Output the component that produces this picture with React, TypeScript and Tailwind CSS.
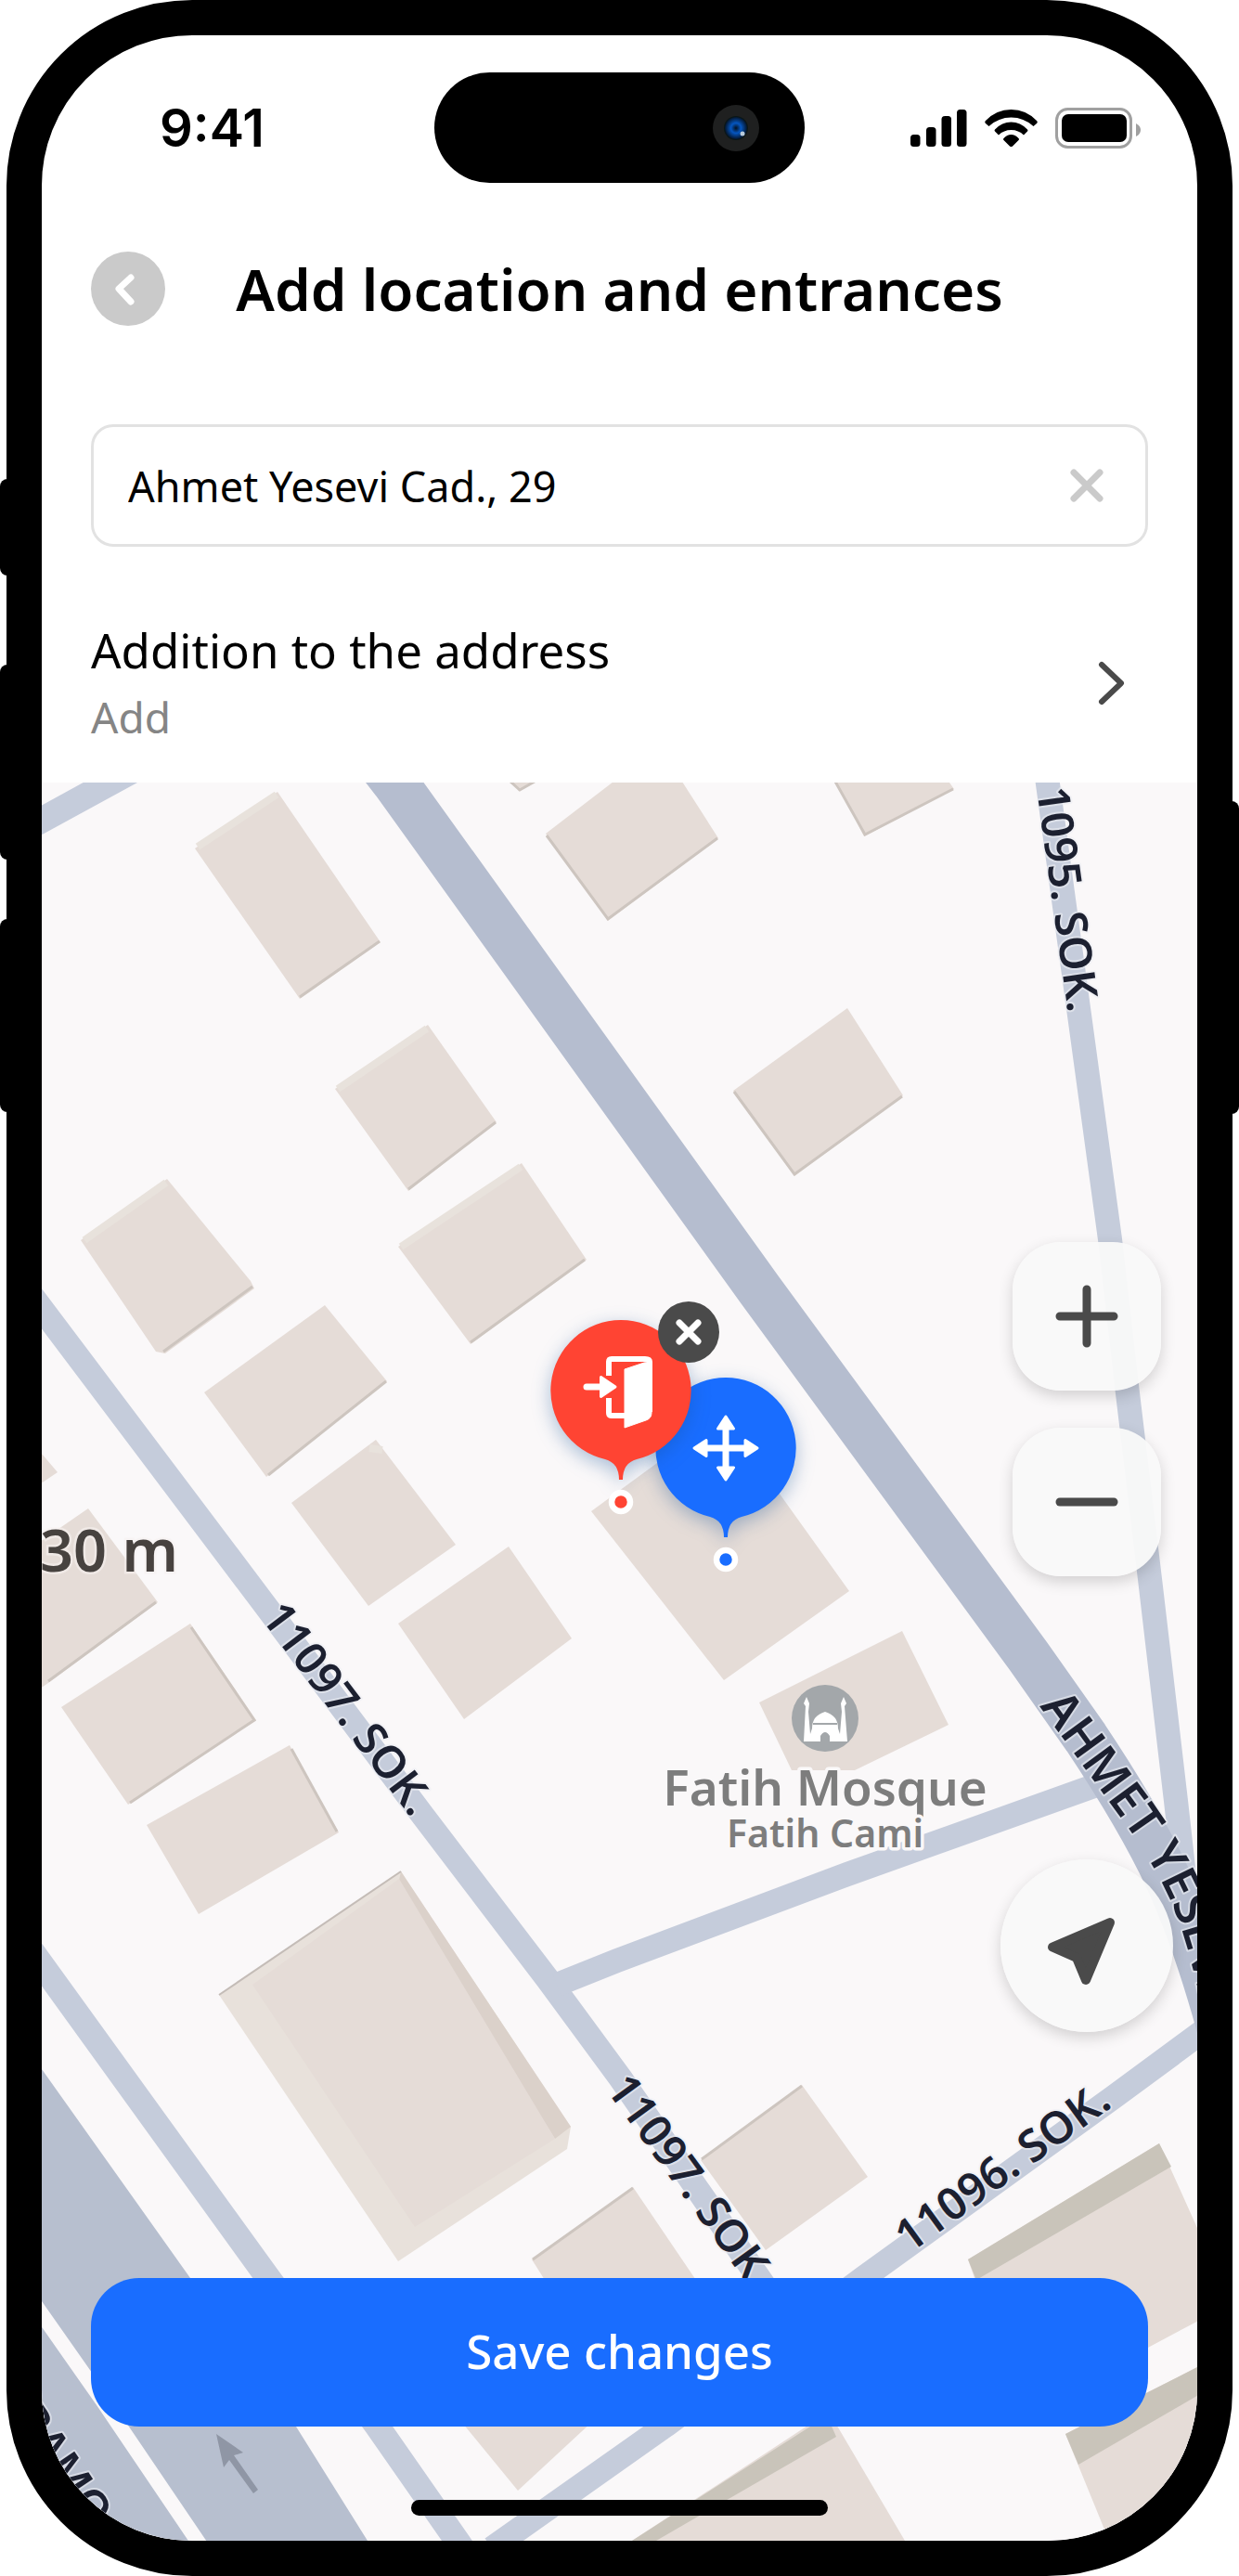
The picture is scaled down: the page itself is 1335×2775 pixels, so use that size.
import { useState } from 'react'
import type { ReactNode } from 'react'

interface Building {
  roof: string
  dark?: string
  light?: string
}

interface StreetLabel {
  text: string
  x: number
  y: number
  angle: number
}

const ROADS = [
  { d: 'M20 897 L150 826', width: 28 },
  { d: 'M1127 830 L1196 1335 L1215 1501 L1239 1701 L1267 1940 L1277 2030', width: 26 },
  { d: 'M30 1390 L284 1727 L455 1955 L590 2132 L668 2238 L815 2450 L860 2515', width: 26 },
  { d: 'M20 2082 L289 2454 L406 2613 L505 2755', width: 27 },
  { d: 'M1310 2178 L1200 2259 L930 2454 L717 2613 L530 2745', width: 26 },
  { d: 'M600 2138 L665 2112 L913 2019 L1190 1920', width: 26 },
]

const BUILDINGS: Building[] = [
  { roof: '299,853 210,914 323,1076 410,1015', dark: '323,1074 409,1014', light: '213,912 298,856' },
  { roof: '461,1104 361,1173 440,1283 535,1209', dark: '440,1281 534,1209', light: '364,1173 460,1108' },
  { roof: '562,1253 429,1343 507,1448 632,1357', dark: '507,1446 630,1357', light: '432,1343 561,1257' },
  { roof: '180,1270 87,1336 168,1456 178,1458 274,1388 270,1380', dark: '176,1456 272,1386', light: '91,1336 179,1274' },
  { roof: '350,1406 220,1500 287,1591 417,1488', dark: '289,1589 416,1488' },
  { roof: '405,1551 314,1619 397,1730 491,1664', light: '398,1560 412,1562' },
  { roof: '548,1666 429,1749 500,1852 616,1765' },
  { roof: '95,1625 30,1670 30,1828 52,1813 170,1726', dark: '52,1811 168,1726' },
  { roof: '40,1560 62,1586 40,1601' },
  { roof: '205,1749 66,1839 138,1944 276,1853', dark: '206,1753 274,1853 140,1942' },
  { roof: '312,1880 158,1966 214,2062 365,1974', dark: '314,1884 363,1973' },
  { roof: '682,2356 573,2434 640,2540 800,2530', dark: '682,2357 574,2434' },
  { roof: '558,2683 490,2600 600,2540 680,2570' },
  { roof: '864,2246 755,2327 825,2424 935,2345', dark: '864,2247 756,2326' },
  { roof: '972,1757 818,1834 853,1907 921,1907 1022,1858' },
  { roof: '779,1524 637,1628 780,1810 915,1714' },
  { roof: '661,842 588,898 655,992 774,903 735,842', dark: '589,900 655,990 773,903' },
  { roof: '898,836 931,901 1028,850 1018,836', dark: '900,842 932,899 1027,850' },
  { roof: '547,836 559,852 580,840', dark: '550,842 560,851 576,842' },
  { roof: '913,1086 790,1175 856,1267 973,1180', dark: '791,1176 856,1265 972,1181' },
]

const LABELS: StreetLabel[] = [
  { text: '1095. SOK.', x: 1117, y: 850, angle: 82 },
  { text: '11097. SOK.', x: 280, y: 1742, angle: 53 },
  { text: '11097. SOK.', x: 652, y: 2250, angle: 54 },
  { text: '11096. SOK.', x: 980, y: 2428, angle: -36 },
  { text: 'RAMO', x: 14, y: 2604, angle: 56 },
]

function StreetMap() {
  return (
    <svg
      viewBox="45 843 1245 1894"
      preserveAspectRatio="xMidYMid slice"
      className="block w-full h-full font-['Noto_Sans',sans-serif]"
      role="img"
      aria-label="Map"
    >
      <rect x="45" y="843" width="1245" height="1894" fill="#faf8f9" />

      {/* Highway */}
      <path d="M30 2207 L45 2229 L205 2454 L319 2614 L396 2737 L30 2737Z" fill="#b7bfcf" />
      <path d="M36 2480 L111 2587 L218 2745" stroke="#faf8f9" strokeWidth="16" fill="none" />
      <g fill="#8f96a5">
        <path d="M233 2622 L262 2642 L252 2645 L278 2682 L273 2686 L247 2650 L241 2658Z" />
      </g>

      {/* Roads */}
      <g fill="none" stroke="#c5ccdb" strokeLinejoin="round">
        {ROADS.map(road => (
          <path key={road.d} d={road.d} strokeWidth={road.width} />
        ))}
      </g>
      <path
        d="M400 810 L425 842 L819 1390 L1108 1784 L1170 1872 Q1232 1965 1262 2032 Q1290 2095 1316 2190"
        fill="none"
        stroke="#b5bdcf"
        strokeWidth="50"
      />

      {/* Buildings */}
      {BUILDINGS.map(b => (
        <g key={b.roof} fill="none">
          <polygon points={b.roof} fill="#e5dcd7" />
          {b.light && <polyline points={b.light} stroke="#e8e2dc" strokeWidth="8" />}
          {b.dark && <polyline points={b.dark} stroke="#cdc5bf" strokeWidth="3" />}
        </g>
      ))}

      {/* Large hall */}
      <polygon points="432,2016 236,2149 429,2436 611,2315 615,2291" fill="#e8e1db" />
      <polygon points="432,2016 615,2291 598,2304 428,2035" fill="#dbd1ca" />
      <polygon points="430,2024 272,2138 447,2399 598,2304" fill="#e5dcd7" />
      <path d="M432 2016 L236 2149" stroke="#c4bcb7" strokeWidth="2" />

      {/* Blocks in the lower right corner */}
      <polygon points="1043,2434 1249,2309 1290,2400 1310,2490 1235,2530 1180,2570 1080,2540" fill="#e5dcd7" />
      <polygon points="1043,2434 1249,2309 1262,2334 1052,2456" fill="#c9c4ba" />
      <polygon points="1148,2622 1300,2545 1300,2737 1195,2737" fill="#e5dcd7" />
      <polygon points="1148,2622 1300,2545 1300,2575 1162,2655" fill="#c9c4ba" />
      <polygon points="893,2598 975,2737 681,2737" fill="#e5dcd7" />
      <polygon points="681,2737 873,2614 890,2600 901,2625 707,2737" fill="#c9c4ba" />

      {/* Street names */}
      <g
        fill="#1c2030"
        stroke="#eceef4"
        strokeOpacity="0.6"
        strokeWidth="4"
        paintOrder="stroke"
        strokeLinejoin="round"
        fontSize="48"
        fontWeight="600"
      >
        {LABELS.map(l => (
          <text key={`${l.text}${l.x}`} x={l.x} y={l.y} transform={`rotate(${l.angle} ${l.x} ${l.y})`}>
            {l.text}
          </text>
        ))}
        <path id="ahmet-yesevi" d="M1120 1838 L1215 1968 Q1255 2025 1272 2075 Q1290 2130 1305 2210" fill="none" stroke="none" />
        <text fontSize="52">
          <textPath href="#ahmet-yesevi">AHMET YESEVİ</textPath>
        </text>
      </g>

      {/* Mosque */}
      <circle cx="889" cy="1851" r="36" fill="#a3a7aa" />
      <g fill="#fff">
        <path d="M866 1876 L868 1838 L866 1835 L869 1828 L872 1835 L871 1844 L873 1868 L875 1862 Q875 1848 889 1844 Q903 1848 903 1862 L905 1868 L907 1844 L906 1835 L909 1828 L912 1835 L910 1838 L913 1876 H894 V1870 Q889 1862 884 1870 V1876Z" />
      </g>
      <path d="M876 1857 H902" stroke="#a3a7aa" strokeWidth="2" />
      <g fill="#7d7d7d" stroke="#faf8f9" strokeWidth="7" paintOrder="stroke" strokeLinejoin="round" fontWeight="600" textAnchor="middle">
        <text x="889" y="1945" fontSize="53">Fatih Mosque</text>
        <text x="889" y="1990" fontSize="41">Fatih Cami</text>
      </g>
      <text x="43" y="1693" fontSize="63" fontWeight="600" fill="#47423f" stroke="#f6f2f0" strokeWidth="5" strokeOpacity="0.6" paintOrder="stroke">
        30 m
      </text>
    </svg>
  )
}

function Pin({ color, children }: { color: string; children: ReactNode }) {
  return (
    <svg className="block w-[154px] h-[210px] overflow-visible" viewBox="0 0 154 210" fill="none">
      <path
        d="M77 1 A76 76 0 0 1 94 151 Q79 155 79 173 H75 Q75 155 60 151 A76 76 0 0 1 77 1Z"
        fill={color}
        className="drop-shadow-[0_6px_10px_rgba(20,80,150,0.35)]"
      />
      <circle cx="77" cy="197" r="10" fill={color} stroke="#fff" strokeWidth="6.5" />
      {children}
    </svg>
  )
}

function StatusBar() {
  return (
    <div className="grid grid-cols-[1fr_399px_1fr] items-center pt-10 font-['Inter',sans-serif]">
      <time className="pl-[127px] text-[56px] leading-none font-semibold">9:41</time>
      <div className="flex h-[119px] items-center justify-end rounded-full bg-black pr-[49px]">
        <svg className="w-[50px] h-[50px]" viewBox="0 0 50 50">
          <defs>
            <radialGradient id="lens">
              <stop offset="0" stopColor="#03101f" />
              <stop offset="0.45" stopColor="#0556c0" />
              <stop offset="1" stopColor="#04152c" />
            </radialGradient>
          </defs>
          <circle cx="25" cy="25" r="25" fill="#1f2020" />
          <circle cx="25" cy="25" r="13" fill="#0b1716" />
          <circle cx="25" cy="25" r="12" fill="url(#lens)" />
          <circle cx="32" cy="31" r="2.5" fill="#b9cbdc" />
        </svg>
      </div>
      <div className="flex items-center justify-end gap-[19px] pr-[61px]">
        <svg className="w-[61px] h-10" viewBox="0 0 61 40">
          <rect x="0" y="27" width="10.500" height="13" rx="3.500" />
          <rect x="17" y="19" width="10.500" height="21" rx="3.500" />
          <rect x="33.500" y="7" width="10.500" height="33" rx="3.500" />
          <rect x="50" y="0" width="10.500" height="40" rx="3.500" />
        </svg>
        <svg className="w-[57px] h-10" viewBox="0 0 57 40">
          <path d="M1 12 Q12.500 0 28.500 0 Q44.500 0 56 12 Q57.500 13.500 56 15 L52.500 18 Q42 8.500 28.500 8.500 Q15 8.500 4.500 18 L1 15 Q-0.500 13.500 1 12Z" />
          <path d="M11 21.500 Q18.500 13.500 28.500 13.500 Q38.500 13.500 46 21.500 Q47 22.500 46 23.500 L42 27.500 Q36.500 22 28.500 22 Q20.500 22 15 27.500 L11 23.500 Q10 22.500 11 21.500Z" />
          <path d="M20.500 31 Q24 27 28.500 27 Q33 27 36.500 31 Q37.500 32 36.500 33 L30 39.500 Q28.500 40.500 27 39.500 L20.500 33 Q19.500 32 20.500 31Z" />
        </svg>
        <svg className="w-[92px] h-11" viewBox="0 0 92 44">
          <rect x="1.500" y="1.500" width="80" height="41" rx="12" fill="none" stroke="#a0a0a0" strokeWidth="3" />
          <rect x="7" y="7" width="70" height="30" rx="7" />
          <path d="M87 17 Q92 19.500 92 24 Q92 28.500 87 31Z" fill="#a0a0a0" />
        </svg>
      </div>
    </div>
  )
}

const MAP_BUTTON = 'flex items-center justify-center bg-[#f9f9f9]/95 shadow-[0_6px_16px_rgba(0,0,0,0.16)]'

export default function App() {
  const [address, setAddress] = useState('Ahmet Yesevi Cad., 29')
  const [hasEntrance, setHasEntrance] = useState(true)

  return (
    <div className="relative bg-white px-[7px] text-black font-['Noto_Sans',sans-serif]">
      {/* Side buttons of the phone */}
      <div className="absolute left-0 top-[516px] w-4 h-[104px] rounded-lg bg-black" />
      <div className="absolute left-0 top-[716px] w-4 h-[210px] rounded-lg bg-black" />
      <div className="absolute left-0 top-[990px] w-4 h-[208px] rounded-lg bg-black" />
      <div className="absolute right-0 top-[863px] w-4 h-[337px] rounded-lg bg-black" />

      <div className="relative overflow-hidden rounded-[200px] border-[38px] border-black bg-white">
        <StatusBar />

        <header className="mt-[74px] grid grid-cols-[80px_1fr_80px] items-center px-[53px]">
          <button aria-label="Back" className="flex size-20 items-center justify-center rounded-full bg-[#cacaca]">
            <svg className="size-20" viewBox="0 0 80 80" fill="none" stroke="#fff" strokeWidth="7" strokeLinecap="round" strokeLinejoin="round">
              <path d="M43 28 L30 40 L43 54" />
            </svg>
          </button>
          <h1 className="text-center text-[62px] leading-[76px] font-semibold whitespace-nowrap">Add location and entrances</h1>
        </header>

        <div className="mx-[53px] mt-[106px] flex h-[132px] items-center rounded-3xl border-[3px] border-[#e2e2e2] pl-[37px] pr-[45px]">
          <input
            aria-label="Address"
            value={address}
            onChange={e => setAddress(e.target.value)}
            className="min-w-0 flex-1 bg-transparent text-[45px] leading-none outline-none"
          />
          <button aria-label="Clear address" onClick={() => setAddress('')}>
            <svg className="size-9" viewBox="0 0 36 36" stroke="#cacaca" strokeWidth="7" strokeLinecap="round">
              <path d="M4 4 L32 32 M32 4 L4 32" />
            </svg>
          </button>
        </div>

        <button className="mt-[75px] flex w-full items-center justify-between pl-[53px] pr-[76px] text-left">
          <span className="flex flex-col">
            <span className="text-[51px] leading-[72px]">Addition to the address</span>
            <span className="text-[46px] leading-[72px] text-[#858585]">Add</span>
          </span>
          <svg className="w-8 h-12" viewBox="0 0 32 48" fill="none" stroke="#4a4a4a" strokeWidth="6" strokeLinecap="round" strokeLinejoin="round">
            <path d="M5 4 L26 24 L5 44" />
          </svg>
        </button>

        <main className="relative mt-[35px] aspect-[1245/1894]">
          <StreetMap />

          <button aria-label="Move location" className="absolute left-[59.200%] top-[44.200%] -translate-x-1/2 -translate-y-[197px]">
            <Pin color="#196dff">
              <g fill="#fff" stroke="#fff" strokeLinejoin="round">
                <path d="M77 50 V104 M50 77 H104" strokeWidth="7" />
                <path strokeWidth="3" d="M77 43 L85.500 56 H68.500Z M77 111 L85.500 98 H68.500Z M43 77 L56 68.500 V85.500Z M111 77 L98 68.500 V85.500Z" />
              </g>
            </Pin>
          </button>

          {hasEntrance && (
            <div className="absolute left-[50.100%] top-[40.900%] -translate-x-1/2 -translate-y-[197px]">
              <button aria-label="Entrance" className="block">
                <Pin color="#ff4433">
                  <path d="M64 61 V46 Q64 43 67 43 H103 Q108 43 108 46 V100 M64 85 V101 Q64 104 67 104 H84" stroke="#fff" strokeWidth="6" />
                  <path d="M102 47 L81 54 V117 L104 109 Q110 107 110 101 V46Z" fill="#fff" stroke="#fff" strokeWidth="1" strokeLinejoin="round" />
                  <path d="M40 73 H58" stroke="#fff" strokeWidth="7" strokeLinecap="round" />
                  <path d="M55.500 62.500 L71 73 L55.500 83.500Z" fill="#fff" stroke="#fff" strokeWidth="3" strokeLinejoin="round" />
                </Pin>
              </button>
              <button
                aria-label="Remove entrance"
                onClick={() => setHasEntrance(false)}
                className="absolute -right-[29px] -top-[19px] flex size-[66px] items-center justify-center rounded-full bg-[#4a4a4a]"
              >
                <svg className="size-7" viewBox="0 0 28 28" stroke="#fff" strokeWidth="7" strokeLinecap="round">
                  <path d="M4 4 L24 24 M24 4 L4 24" />
                </svg>
              </button>
            </div>
          )}

          <div className="pointer-events-none absolute inset-0 flex flex-col justify-end *:pointer-events-auto">
            <div className="mr-[26px] flex flex-col items-center self-end">
              <button aria-label="Zoom in" className={`${MAP_BUTTON} size-40 rounded-[52px]`}>
                <svg className="size-[68px]" viewBox="0 0 68 68" stroke="#4a4a4a" strokeWidth="9" strokeLinecap="round">
                  <path d="M5 34 H63 M34 5 V63" />
                </svg>
              </button>
              <button aria-label="Zoom out" className={`${MAP_BUTTON} mt-10 size-40 rounded-[52px]`}>
                <svg className="size-[68px]" viewBox="0 0 68 68" stroke="#4a4a4a" strokeWidth="9" strokeLinecap="round">
                  <path d="M5 34 H63" />
                </svg>
              </button>
              <button aria-label="My location" className={`${MAP_BUTTON} mt-[305px] size-[186px] rounded-full`}>
                <svg className="size-[186px]" viewBox="0 0 186 186" fill="#4a4a4a" stroke="#4a4a4a" strokeWidth="10" strokeLinejoin="round">
                  <path d="M118 68 L56 94.500 L82 106 L92 130Z" />
                </svg>
              </button>
            </div>
            <button className="mx-[53px] mt-[265px] h-40 rounded-[52px] bg-[#196dff] pb-1 text-[51px] font-medium text-white">
              Save changes
            </button>
            <div className="mx-auto mt-[79px] mb-[27px] h-[17px] w-[449px] rounded-full bg-black" />
          </div>
        </main>
      </div>
    </div>
  )
}
